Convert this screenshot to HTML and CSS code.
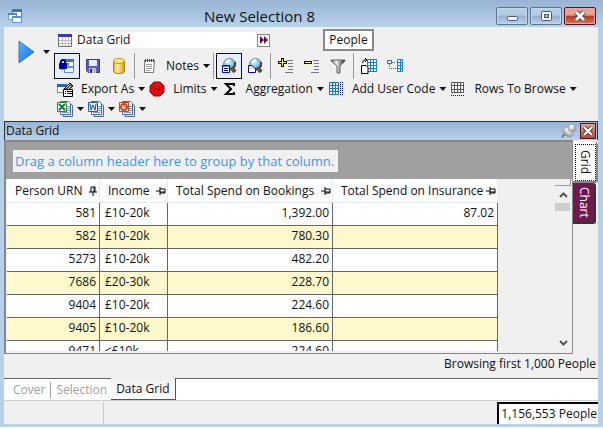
FILE: index.html
```html
<!DOCTYPE html>
<html lang="en">
<head>
  <meta charset="UTF-8" />
  <title>New Selection 8</title>
  <link rel="stylesheet" href="styles.css">
</head>
<body>

<svg width="0" height="0" class="defs" aria-hidden="true">
  <defs>
    <linearGradient id="playFill" x1="0" y1="0" x2="1" y2="1">
      <stop offset="0" stop-color="#5ab4ff"/><stop offset="1" stop-color="#0a6cf0"/>
    </linearGradient>
    <linearGradient id="gold" x1="0" y1="0" x2="1" y2="0">
      <stop offset="0" stop-color="#e8a820"/><stop offset=".35" stop-color="#fff0a0"/><stop offset="1" stop-color="#dc9c10"/>
    </linearGradient>
    <linearGradient id="metal" x1="0" y1="0" x2="1" y2="0">
      <stop offset="0" stop-color="#666"/><stop offset=".4" stop-color="#eee"/><stop offset="1" stop-color="#222"/>
    </linearGradient>
    <radialGradient id="lens" cx=".4" cy=".3" r=".8">
      <stop offset="0" stop-color="#e4f8ff"/><stop offset=".5" stop-color="#7cc4e8"/><stop offset="1" stop-color="#20688c"/>
    </radialGradient>
    <radialGradient id="pinFill" cx=".4" cy=".3" r=".8">
      <stop offset="0" stop-color="#fff"/><stop offset="1" stop-color="#8c8c8c"/>
    </radialGradient>
    <symbol id="windows" viewBox="0 0 16 16">
      <path d="M5.500 1.500h9v8h-9z" fill="#fff" stroke="#4c80c8"/><path d="M5 1h10v3H5z" fill="#3c74c4"/>
      <path d="M1.500 5.500h8v6h-8z" fill="#fff" stroke="#6c9cdc"/><path d="M1 5h9v2H1z" fill="#4c84d0"/>
      <path d="M5.500 8.500h9v6h-9z" fill="#f4f9ff" stroke="#5c90d4"/><path d="M5 8h10v2H5z" fill="#5890dc"/>
    </symbol>
    <symbol id="page" viewBox="0 0 16 16">
      <path d="M6 2.500h7l2.500 2v11H6z" fill="#dce8ff" stroke="#4c68b0"/>
      <path d="M3.500 .5h8l2 2v11h-10z" fill="#fff" stroke="#4c68b0"/>
      <path d="M10 5.500h3M10 7.500h3M10 9.500h3M5 11.500h7" stroke="#7c94cc"/>
    </symbol>
    <symbol id="pin" viewBox="0 0 10 10">
      <path d="M0 5h4M4 1v8M4 3h5v4H4M4 6h5" fill="none" stroke="#000"/>
    </symbol>
    <symbol id="magnifier" viewBox="0 0 16 16">
      <path d="M10 9l4 5" stroke="#6c4428" stroke-width="4"/>
      <circle cx="8.500" cy="6.500" r="6" fill="url(#lens)" stroke="#6c8494"/>
      <path d="M9 11q6-1 5-7" fill="none" stroke="#4c4038" stroke-width="2"/>
      <path d="M5 5q1-3 4-3" fill="none" stroke="#fff" stroke-width="2"/>
    </symbol>
  </defs>
</svg>

<div class="window">
  <header class="title-bar">
    <svg class="icon"><use href="#windows"/></svg>
    <h1>New Selection 8</h1>
    <div class="window-buttons">
      <button class="win-btn" aria-label="Minimize"><svg width="14" height="12" viewBox="0 0 14 12"><rect x="2.500" y="6.500" width="10" height="4" rx="1" fill="#f4f4f4" stroke="#4c5c70"/></svg></button>
      <button class="win-btn" aria-label="Maximize"><svg width="14" height="12" viewBox="0 0 14 12"><rect x="2.500" y="1.500" width="10" height="9" rx="1" fill="#f4f4f4" stroke="#4c5c70"/><rect x="5.500" y="4.500" width="4" height="3" fill="#9cb8d4" stroke="#4c5c70"/></svg></button>
      <button class="win-btn win-close" aria-label="Close"><svg width="14" height="12" viewBox="0 0 14 12"><path d="M3 2l8 8M11 2l-8 8" stroke="#4c4c5c" stroke-width="5"/><path d="M3 2l8 8M11 2l-8 8" stroke="#f4f4f4" stroke-width="3"/></svg></button>
    </div>
  </header>

  <main class="content">
    <div class="toolbar">
      <button class="run" aria-label="Run"><svg width="18" height="26" viewBox="0 0 18 26"><path d="M1 2l15 11L1 24z" fill="url(#playFill)" stroke="#4c78ac"/></svg></button>
      <button class="run-menu arrow" aria-label="Run options"></button>
      <div class="tool-rows">
        <div class="tool-row source-row">
          <div class="source">
            <svg class="icon" viewBox="0 0 16 16"><path d="M1.500 2.500h13v12h-13z" fill="#fff" stroke="#777"/><path d="M1 2h14v3H1z" fill="#4038a8"/><path d="M2 8.500h12M2 11.500h12M5.500 5v9M8.500 5v9M11.500 5v9" stroke="#bbb"/></svg>
            <span class="source-name">Data Grid</span>
            <button class="more" aria-label="More"><svg width="9" height="8" viewBox="0 0 9 8"><path d="M1 0l4 4-4 4zM5 0l4 4-4 4z" fill="#600848"/></svg></button>
          </div>
          <button class="people">People</button>
        </div>

        <div class="tool-row icon-row">
          <button class="tool active" aria-label="Lock"><svg class="icon" viewBox="0 0 16 16"><use href="#windows"/><path d="M2 6V4q0-2 2-2t2 2v2" fill="none" stroke="#000080" stroke-width="2"/><path d="M0 5h8v6H0z" fill="#0000b8"/><path d="M3 7h2v2H3z" fill="#000"/></svg></button>
          <button class="tool" aria-label="Save"><svg class="icon" viewBox="0 0 16 16"><path d="M1.500 1.500h13v13H3l-1.500-2z" fill="#5c5cc0" stroke="#383890"/><path d="M4 2h8v6H4z" fill="#e4ecff"/><path d="M4 10h7v5H4z" fill="#bbb"/><path d="M5 11h2v4H5z" fill="#303080"/></svg></button>
          <button class="tool" aria-label="Database"><svg class="icon" viewBox="0 0 16 16"><path d="M2.500 3v10q0 2.500 5.500 2.500t5.500-2.500V3" fill="url(#gold)" stroke="#b88010"/><ellipse cx="8" cy="3" rx="5.500" ry="2.500" fill="#ffe890" stroke="#c89018"/></svg></button>
          <span class="separator"></span>
          <button class="menu-btn notes"><svg class="icon" viewBox="0 0 16 16"><path d="M2.500 2.500h10l-1 12h-9z" fill="#fff" stroke="#777"/><path d="M4 6.500h6M4 8.500h6M4 10.500h6M4 12.500h4" stroke="#999"/><path d="M3.500 1v3M5.500 1v3M7.500 1v3M9.500 1v3M11.500 1v3" stroke="#444"/></svg><span>Notes</span><i class="arrow"></i></button>
          <span class="separator"></span>
          <button class="tool active" aria-label="View list"><svg class="icon" viewBox="0 0 16 16"><use href="#magnifier"/><path d="M1.500 7.500h7v7h-7z" fill="#fff" stroke="#0000d8"/><path d="M1 8h8M3 10.500h4M3 12.500h4" stroke="#0000d8"/></svg></button>
          <button class="tool" aria-label="View page"><svg class="icon" viewBox="0 0 16 16"><use href="#magnifier"/><path d="M1.500 7.500H5l3.500 3.500v3.500h-7z" fill="#fff" stroke="#0000d8"/></svg></button>
          <span class="separator"></span>
          <button class="tool" aria-label="Add row"><svg class="icon" viewBox="0 0 16 16"><path d="M9 2.500h6M10 5.500h5M10 8.500h5M10 11.500h5M7 14.500h8" stroke="#777"/><path d="M3 0h3v3h3v3H6v3H3V6H0V3h3z" fill="#000"/><path d="M4 1h1v3h3v1H5v3H4V5H1V4h3z" fill="#ff0"/></svg></button>
          <button class="tool" aria-label="Remove row"><svg class="icon" viewBox="0 0 16 16"><path d="M9 2.500h6M10 5.500h5M10 8.500h5M10 11.500h5M7 14.500h8" stroke="#777"/><path d="M0 3h8v3H0z" fill="#000"/><path d="M1 4h6v1H1z" fill="#ff0"/></svg></button>
          <button class="tool" aria-label="Filter"><svg class="icon" viewBox="0 0 16 16"><path d="M1 2h14v1l-5 5v7H7V8L1 3z" fill="url(#metal)" stroke="#666"/></svg></button>
          <span class="separator"></span>
          <button class="tool" aria-label="Copy grid"><svg class="icon" viewBox="0 0 16 16"><path d="M6.500 1.500h9v12h-9zM6 4.500h10M6 7.500h10M6 10.500h10M9.500 1v13M12.500 1v13" fill="#fff" stroke="#0c80ff"/><path d="M.5 7.500H5l2 2v6H.5z" fill="#fff" stroke="#000"/><path d="M1.500 5q0-3.500 4-3.500M4 0l2 2-2 2" fill="none" stroke="#000"/></svg></button>
          <button class="tool" aria-label="Link grid"><svg class="icon" viewBox="0 0 16 16"><path d="M.5 2.500h4v3h-4z" fill="#ff8" stroke="#0c70ff"/><path d="M2.500 6v4.500H10M5 4.500h3" fill="none" stroke="#0c60e0" stroke-dasharray="1 1"/><path d="M10.500 1.500h5v12h-5zM10 4.500h6M10 7.500h6M10 10.500h6M13.500 1v13" fill="#fff" stroke="#0c80ff"/></svg></button>
        </div>

        <div class="tool-row">
          <button class="menu-btn"><svg class="icon" viewBox="0 0 16 16"><path d="M.5 3.500h9v8h-9z" fill="#fff" stroke="#888"/><path d="M0 3h10v3H0z" fill="#2868b8"/><path d="M6.500 8.500h9v7h-9z" fill="#fff" stroke="#000"/><path d="M8 10.500h1M10 10.500h5M8 12.500h1M10 12.500h5" stroke="#000"/><path d="M7 8l6-6 3 3-5 4z" fill="#555" stroke="#000"/><path d="M9 7l4-4M11 8l3-3" stroke="#ddd"/></svg><span>Export As</span><i class="arrow"></i></button>
          <button class="menu-btn"><svg class="icon" viewBox="0 0 16 16"><path d="M5 1h6l4 4v6l-4 4H5l-4-4V5z" fill="#f00808" stroke="#980000"/><path d="M6 10V6l4 4V6" fill="none" stroke="#800000"/></svg><span>Limits</span><i class="arrow"></i></button>
          <button class="menu-btn"><svg class="icon" viewBox="0 0 16 16"><path d="M12 5V3H4l5 5-5 5h8v-2" fill="none" stroke="#000" stroke-width="2"/></svg><span>Aggregation</span><i class="arrow"></i></button>
          <button class="menu-btn"><svg class="icon" viewBox="0 0 16 16"><path d="M1.500 1.500h9v12h-9zM1 4.500h10M1 7.500h10M1 10.500h10M4.500 1v13M7.500 1v13" fill="#fff" stroke="#0c70ff"/><path d="M12.500 1v14M14.500 1v14" stroke="#0000c0" stroke-dasharray="1 1"/></svg><span>Add User Code</span><i class="arrow"></i></button>
          <button class="menu-btn"><svg class="icon" viewBox="0 0 16 16"><path d="M1.500 1.500h12v10h-12zM1 4.500h13M1 8.500h13M4.500 1v11M7.500 1v11M10.500 1v11" fill="#fff" stroke="#555"/><path d="M1 14.500h13" stroke="#0000c0" stroke-dasharray="1 1"/></svg><span>Rows To Browse</span><i class="arrow"></i></button>
        </div>

        <div class="tool-row office-row">
          <button class="menu-btn" aria-label="Excel"><svg class="icon" viewBox="0 0 16 16"><use href="#page"/><path d="M.5 1.500h9v9h-9z" fill="#e8f8e8" stroke="#248838"/><path d="M2 3l6 6M8 3L2 9" stroke="#188030" stroke-width="2"/></svg><i class="arrow"></i></button>
          <button class="menu-btn" aria-label="Word"><svg class="icon" viewBox="0 0 16 16"><use href="#page"/><path d="M.5 1.500h9v9h-9z" fill="#e8f0ff" stroke="#2858b0"/><path d="M2 3l1 6 2-5 2 5 1-6" fill="none" stroke="#1848a8"/></svg><i class="arrow"></i></button>
          <button class="menu-btn" aria-label="PowerPoint"><svg class="icon" viewBox="0 0 16 16"><use href="#page"/><path d="M.5 1.500h9v9h-9z" fill="#fff0e8" stroke="#c84818"/><circle cx="5" cy="6" r="3" fill="#fff" stroke="#d04814" stroke-width="2"/><path d="M5 3v3h3" fill="none" stroke="#d04814"/></svg><i class="arrow"></i></button>
        </div>
      </div>
    </div>

    <section class="panel">
      <header class="panel-title">
        <h2>Data Grid</h2>
        <button class="pin-btn" aria-label="Pin"><svg class="icon" viewBox="0 0 16 16"><path d="M1 14l6-6" stroke="#777" stroke-width="2"/><ellipse cx="7" cy="9" rx="6" ry="4" transform="rotate(40 7 9)" fill="url(#pinFill)" stroke="#888" stroke-width=".5"/><circle cx="11" cy="5" r="4" fill="url(#pinFill)" stroke="#888" stroke-width=".5"/></svg></button>
        <button class="panel-close" aria-label="Close panel"><svg width="12" height="10" viewBox="0 0 12 10"><path d="M2 1l8 8M10 1L2 9" stroke="#444" stroke-width="4"/><path d="M2 1l8 8M10 1L2 9" stroke="#fff" stroke-width="2"/></svg></button>
      </header>

      <div class="panel-body">
        <div class="grid">
          <div class="group-band"><span>Drag a column header here to group by that column.</span></div>
          <div class="grid-area">
            <div class="table-wrap">
              <table>
                <colgroup><col class="col-urn"><col class="col-income"><col class="col-spend"><col class="col-spend"></colgroup>
                <thead>
                  <tr>
                    <th><div>Person URN<svg class="pin pinned"><use href="#pin"/></svg></div></th>
                    <th><div>Income<svg class="pin"><use href="#pin"/></svg></div></th>
                    <th><div>Total Spend on Bookings<svg class="pin"><use href="#pin"/></svg></div></th>
                    <th><div>Total Spend on Insurance<svg class="pin"><use href="#pin"/></svg></div></th>
                  </tr>
                </thead>
                <tbody>
                  <tr><td>581</td><td>£10-20k</td><td>1,392.00</td><td>87.02</td></tr>
                  <tr><td>582</td><td>£10-20k</td><td>780.30</td><td></td></tr>
                  <tr><td>5273</td><td>£10-20k</td><td>482.20</td><td></td></tr>
                  <tr><td>7686</td><td>£20-30k</td><td>228.70</td><td></td></tr>
                  <tr><td>9404</td><td>£10-20k</td><td>224.60</td><td></td></tr>
                  <tr><td>9405</td><td>£10-20k</td><td>186.60</td><td></td></tr>
                  <tr><td>9471</td><td>&lt;£10k</td><td>224.60</td><td></td></tr>
                </tbody>
              </table>
            </div>
            <div class="scrollbar">
              <span class="splitter"></span>
              <button aria-label="Scroll up"><svg width="9" height="6" viewBox="0 0 9 6"><path d="M1 5l3.500-3.500L8 5" fill="none" stroke="#555" stroke-width="2"/></svg></button>
              <span class="thumb"></span>
              <button class="scroll-down" aria-label="Scroll down"><svg width="9" height="6" viewBox="0 0 9 6"><path d="M1 1l3.500 3.500L8 1" fill="none" stroke="#555" stroke-width="2"/></svg></button>
            </div>
          </div>
        </div>
        <nav class="side-tabs">
          <button class="side-tab selected">Grid</button>
          <button class="side-tab">Chart</button>
        </nav>
      </div>
      <p class="browsing">Browsing first 1,000 People</p>
    </section>

    <nav class="tabs">
      <button class="tab">Cover</button>
      <button class="tab">Selection</button>
      <button class="tab current">Data Grid</button>
    </nav>

    <footer class="status">
      <span class="status-left"></span>
      <span class="status-mid"></span>
      <span class="status-count">1,156,553 People</span>
    </footer>
  </main>
</div>

</body>
</html>
```
FILE: styles.css
```css
* {
  box-sizing: border-box;
}
body {
  margin: 0;
  font-family: "Open Sans", "Noto Sans", sans-serif;
  font-size: 12px;
  line-height: 16px;
  color: #111;
  background: #fff;
}
button {
  font: inherit;
  color: inherit;
  background: none;
  border: none;
  padding: 0;
}
.defs {
  position: absolute;
}
svg {
  display: block;
  flex: none;
}
.icon {
  width: 16px;
  height: 16px;
}
.window {
  height: calc(100vh - 2px);
  display: flex;
  flex-direction: column;
  padding: 0 5px 3px 4px;
  background: linear-gradient(#98b4d2, #b8d1eb 27px, #b8d1eb);
}

/* title bar */
.title-bar {
  height: 27px;
  flex: none;
  display: flex;
  align-items: center;
  padding: 4px 2px 0 3px;
}
.title-bar h1 {
  flex: 1;
  margin: 0;
  font-size: 15px;
  font-weight: normal;
  text-align: center;
}
.window-buttons {
  display: flex;
  gap: 2px;
}
.win-btn {
  width: 32px;
  height: 18px;
  display: flex;
  align-items: center;
  justify-content: center;
  border: 1px solid #5c7490;
  border-radius: 2px;
  box-shadow: inset 0 0 0 1px #c4d8ec;
  background: linear-gradient(#b4cce4 45%, #94b0cc 50%, #b8d1eb);
}
.win-close {
  border-color: #501420;
  box-shadow: inset 0 0 0 1px #e8a8a0;
  background: linear-gradient(#e8a090 45%, #b83820 50%, #d87860);
}

.content {
  flex: 1;
  min-height: 0;
  display: flex;
  flex-direction: column;
  background: #f0f0f0;
}

/* toolbar */
.toolbar {
  height: 94px;
  flex: none;
  display: flex;
  align-items: flex-start;
}
.run {
  margin: 12px 7px 0 14px;
}
.arrow {
  width: 7px;
  height: 4px;
  flex: none;
  background: #111;
  clip-path: polygon(0 0, 100% 0, 50% 100%);
}
.run-menu {
  margin: 23px 4px 0 0;
}
.tool-rows {
  flex: 1;
}
.tool-row {
  height: 20px;
  display: flex;
  align-items: center;
  padding-left: 1px;
  white-space: nowrap;
}
.source-row {
  height: 26px;
  gap: 53px;
  padding-left: 0;
}
.source {
  width: 216px;
  height: 16px;
  display: flex;
  align-items: center;
  padding-left: 3px;
}
.source-name {
  flex: 1;
  padding-left: 4px;
  background: #fff;
}
.more {
  width: 13px;
  height: 13px;
  display: flex;
  align-items: center;
  justify-content: center;
  border: 1px solid #888;
  background: #fff;
}
.people {
  width: 51px;
  height: 22px;
  border: 2px solid #888;
  background: #fff;
}
.icon-row {
  height: 26px;
  padding-left: 0;
}
.tool {
  width: 26px;
  height: 26px;
  display: flex;
  align-items: center;
  justify-content: center;
}
.active {
  border: 1px solid #111;
  background: #e4eefa;
}
.separator {
  width: 1px;
  height: 26px;
  flex: none;
  margin: 0 2px;
  background: #999;
}
.menu-btn {
  display: flex;
  align-items: center;
  padding: 0 2px;
}
.menu-btn span {
  padding: 0 4px 0 8px;
}
.notes {
  padding: 0 1px 0 5px;
}
.office-row .menu-btn {
  gap: 4px;
}

/* panel */
.panel {
  flex: 1;
  min-height: 0;
  display: flex;
  flex-direction: column;
}
.panel-title {
  height: 19px;
  flex: none;
  display: flex;
  align-items: center;
  padding: 0 1px;
  border: 1px solid #333;
  border-bottom: none;
  background: linear-gradient(#98b4d2, #b8d1eb);
}
.panel-title h2 {
  flex: 1;
  margin: 0;
  font-size: 12px;
  font-weight: normal;
}
.panel-close {
  width: 16px;
  height: 16px;
  display: flex;
  align-items: center;
  justify-content: center;
  margin-left: 3px;
  border: 1px solid #501420;
  background: linear-gradient(#e8a090, #c04830);
}
.panel-body {
  flex: 1;
  min-height: 0;
  display: flex;
}
.grid {
  flex: 1;
  min-width: 0;
  display: flex;
  flex-direction: column;
  border: 2px solid #888;
  border-width: 2px 1px 1px 2px;
}
.group-band {
  height: 37px;
  flex: none;
  padding: 8px 7px;
  background: #a0a0a0;
}
.group-band span {
  display: inline-block;
  height: 22px;
  padding: 0 4px 0 2px;
  font-size: 13px;
  line-height: 22px;
  color: #3898f8;
  background: #f0f0f0;
}
.grid-area {
  flex: 1;
  min-height: 0;
  display: flex;
  justify-content: space-between;
  padding: 0 1px 2px 1px;
}
.table-wrap {
  overflow: hidden;
}
table {
  table-layout: fixed;
  width: 491px;
  border-collapse: separate;
  border-spacing: 0;
}
.col-urn {
  width: 93px;
}
.col-income {
  width: 68px;
}
.col-spend {
  width: 165px;
}
th {
  height: 24px;
  padding: 0 1px 0 8px;
  font-weight: normal;
  white-space: nowrap;
  border-right: 1px solid #e4ecf8;
  border-bottom: 1px solid #e4ecf8;
  background: #fcfdff;
}
th div {
  display: flex;
  align-items: center;
  justify-content: space-between;
}
.pin {
  width: 10px;
  height: 10px;
}
.pinned {
  transform: rotate(-90deg);
}
td {
  height: 23px;
  padding: 0 3px 2px;
  text-align: right;
  border-right: 1px solid #666;
  border-bottom: 1px solid #666;
  background: #fff;
}
td:nth-child(2) {
  padding-left: 5px;
  text-align: left;
}
tr:nth-child(even) td {
  background: #fff8cc;
}
.scrollbar {
  width: 16px;
  display: flex;
  flex-direction: column;
}
.splitter {
  height: 7px;
  border: 1px solid #999;
  border-width: 0 1px 1px 0;
}
.scrollbar button {
  height: 17px;
  display: flex;
  align-items: center;
  justify-content: center;
}
.thumb {
  height: 8px;
  margin-right: 1px;
  background: #cdcdcd;
}
.scrollbar .scroll-down {
  margin-top: auto;
}
.side-tabs {
  width: 25px;
  padding-top: 2px;
}
.side-tab {
  width: 23px;
  height: 41px;
  display: block;
  writing-mode: vertical-rl;
  text-align: center;
  color: #fff;
  background: #701850;
  border: 1px solid #333;
  border-width: 0 2px 2px 0;
  border-radius: 0 3px 3px 0;
}
.side-tab.selected {
  width: 25px;
  color: #111;
  background: #fff;
  border-color: #888;
  outline: 1px dotted #111;
  outline-offset: -3px;
}
.browsing {
  height: 24px;
  flex: none;
  margin: 0;
  padding: 2px 2px 0 0;
  text-align: right;
}

/* bottom tabs */
.tabs {
  height: 23px;
  flex: none;
  display: flex;
  border-top: 1px solid #666;
  border-bottom: 1px solid #d0d0d0;
  background: #fff;
}
.tab {
  height: 16px;
  margin-top: 3px;
  padding: 0 5px;
  color: #a0a0a0;
  border-right: 1px solid #a0a0a0;
}
.tab:first-child {
  padding-left: 9px;
}
.tab:nth-child(2) {
  padding-right: 4px;
  border: none;
}
.tab.current {
  height: 22px;
  margin-top: -1px;
  color: #111;
  background: linear-gradient(#f0f0f0, #fff);
  border: 1px solid #555;
  border-width: 0 1px 1px 0;
}

.status {
  height: 23px;
  flex: none;
  display: flex;
  padding-top: 1px;
}
.status-left {
  width: 100px;
  border-right: 1px solid #ccc;
}
.status-mid {
  flex: 1;
}
.status-count {
  padding: 2px 1px 0 2px;
  border: 1px solid #000;
  border-width: 2px 0 0 2px;
  background: #fff;
}
```
